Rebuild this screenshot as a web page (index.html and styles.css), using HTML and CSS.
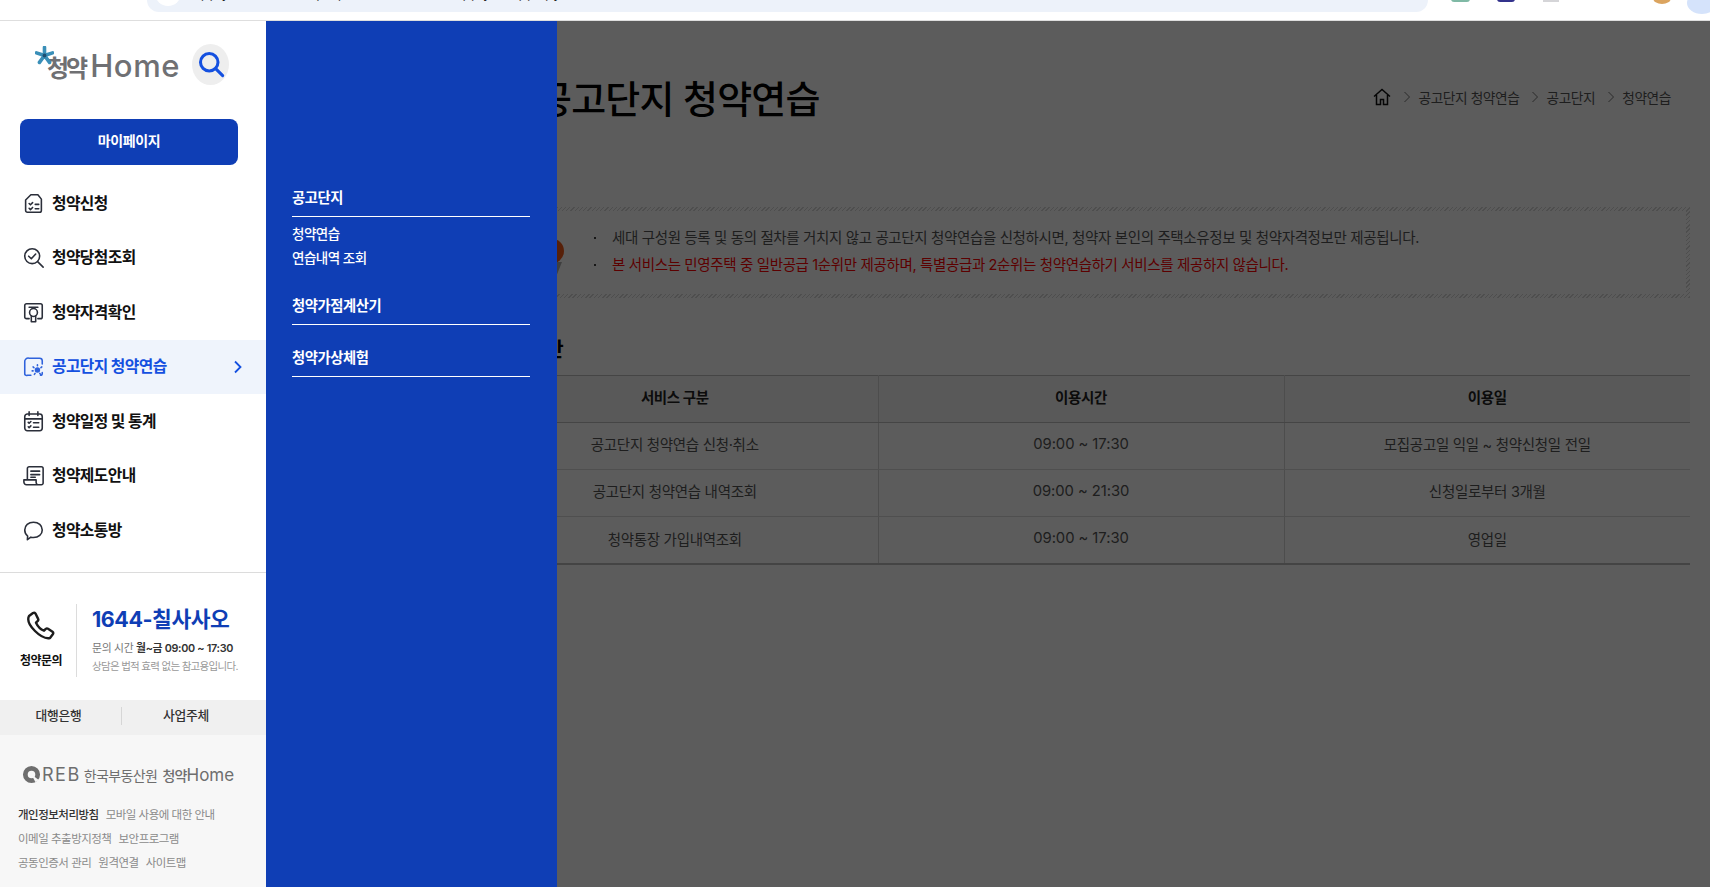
FILE: index.html
```html
<!DOCTYPE html>
<html lang="ko">
  <head>
    <title>청약Home - 공고단지 청약연습</title>
    <meta charset="utf-8" />
    <link rel="stylesheet" href="styles.css">
  </head>

  <body>
    <div class="toolbar">
      <div class="urlbar">
        <span class="url-dot"></span>
        <span class="url-text">applyhome.co.kr/ap/apa/selectPracticeApply.do?pp=py</span>
      </div>
      <div class="tool-icons">
        <span class="tool tool-green"></span>
        <span class="tool tool-navy"></span>
        <span class="tool tool-gray"></span>
        <span class="tool tool-orange"></span>
        <span class="tool tool-blue"></span>
      </div>
    </div>

    <div class="page">
      <aside class="sidebar">
        <div class="logo-row">
          <div class="logo">
            <svg class="logo-star" viewBox="0 0 20 20">
              <path d="M10 10V1.500M10 10l8.500-2.800M10 10l5.300 7.300M10 10l-5.300 7.300M10 10L1.500 7.200" stroke="#3a8fb8" stroke-width="3.800" stroke-linecap="round" />
              <circle cx="10" cy="10" r="2" fill="#1d4f73" />
            </svg>
            <span class="logo-kr">청약</span><span class="logo-en">Home</span>
          </div>
          <span class="search-btn">
            <svg viewBox="0 0 24 24" width="28" height="28" fill="none" stroke="#1450e0" stroke-width="2.600" stroke-linecap="round">
              <circle cx="10.500" cy="10.500" r="7.500" />
              <path d="M16 16l6 6" />
            </svg>
          </span>
        </div>

        <a class="mypage-btn">마이페이지</a>

        <ul class="menu">
          <li class="menu-item">
            <svg class="menu-icon" viewBox="0 0 24 24"><path d="M9 2h8l4 5v13a2 2 0 0 1-2 2H5a2 2 0 0 1-2-2V8z" /><path d="M7 12l1.500 1.500L11 11M7 17.500l1.500 1.500L11 16.500M14 13h4M14 18h4" /></svg>
            청약신청
          </li>
          <li class="menu-item">
            <svg class="menu-icon" viewBox="0 0 24 24"><circle cx="10.500" cy="10.500" r="8.500" /><path d="M6.500 10.500l3 3 5-5.500M17 17l6 6" /></svg>
            청약당첨조회
          </li>
          <li class="menu-item">
            <svg class="menu-icon" viewBox="0 0 24 24"><path d="M7 19H4a2 2 0 0 1-2-2V4a2 2 0 0 1 2-2h16a2 2 0 0 1 2 2v13a2 2 0 0 1-2 2h-3" /><circle cx="12" cy="12" r="4.500" /><path d="M9.500 16v6.500h5V16M7 6h10" /></svg>
            청약자격확인
          </li>
          <li class="menu-item menu-active">
            <svg class="menu-icon" viewBox="0 0 24 24"><path d="M7 2.500h12a3 3 0 0 1 3 3V9M22 19v1a2 2 0 0 1-2 2M9 22H5a2 2 0 0 1-3-2V7a4 4 0 0 1 5-4.500" /><circle cx="16.500" cy="16" r="2.200" fill="#2f62dc" /><path d="M16.500 10v1M11.500 12.500l1 .8M10.500 17h1M13 21l.8-1.200M20 21l-.8-1.200M21.500 12.500l-1 .8" /></svg>
            공고단지 청약연습
            <svg class="menu-arrow" viewBox="0 0 10 14"><path d="M2 1.500l5.500 5.500-5.500 5.500" /></svg>
          </li>
          <li class="menu-item">
            <svg class="menu-icon" viewBox="0 0 24 24"><rect x="2" y="3.500" width="20" height="19" rx="3" /><path d="M2 9h20M7 1v4M17 1v4M6 13l1 1 2-2M6 18l1 1 2-2M12 13.500h6M12 18.500h6" /></svg>
            청약일정 및 통계
          </li>
          <li class="menu-item">
            <svg class="menu-icon" viewBox="0 0 24 24"><path d="M5 17V4a2 2 0 0 1 2-2h14a2 2 0 0 1 2 2v17a2 2 0 0 1-2 1.500H4a3 3 0 0 1-3-3V17h14v3a2.500 2.500 0 0 0 2 2.500" /><path d="M9 7h10M9 11h10M9 14h5" /></svg>
            청약제도안내
          </li>
          <li class="menu-item">
            <svg class="menu-icon" viewBox="0 0 24 24"><path d="M12 2.500c5.800 0 10 3.800 10 8.800s-4.200 8.700-10 8.700c-1 0-2-.1-3-.4L5 22.500l.3-4.200C3.200 16.600 2 14.200 2 11.300 2 6.300 6.200 2.500 12 2.500z" /></svg>
            청약소통방
          </li>
        </ul>

        <div class="call">
          <div class="call-left">
            <svg class="call-icon" viewBox="0 0 32 32"><path d="M8 3L4 6c-2 4 1 10 6 15s10 8 15 7l3-4c.5-1 .3-1.700-.5-2.300l-4.500-3c-.8-.5-1.500-.4-2.200.2l-1.800 1.800c-3-1.200-6.500-4.800-8-8l1.800-1.800c.6-.7.7-1.500.2-2.300L10.500 3.500C9.800 2.700 9 2.500 8 3z" /></svg>
            <span class="call-label">청약문의</span>
          </div>
          <div class="call-right">
            <div class="call-number">1644-칠사사오</div>
            <div class="call-time">문의 시간 <b>월~금 09:00 ~ 17:30</b></div>
            <div class="call-note">상담은 법적 효력 없는 참고용입니다.</div>
          </div>
        </div>

        <div class="partner">
          <a class="partner-link">대행은행</a>
          <a class="partner-link">사업주체</a>
        </div>

        <div class="foot">
          <div class="foot-logo">
            <svg class="reb-mark" viewBox="0 0 20 20"><circle cx="10" cy="10" r="6.500" fill="none" stroke="#6e6e6e" stroke-width="5" /><path d="M10 10l8 6-4 2z" fill="#f7f7f7" /></svg>
            <span class="reb-text">REB</span>
            <span class="reb-kr">한국부동산원</span>
            <span class="reb-home"><b>청약</b>Home</span>
          </div>
          <div class="foot-line"><b>개인정보처리방침</b><span>모바일 사용에 대한 안내</span></div>
          <div class="foot-line"><span>이메일 추출방지정책</span><span>보안프로그램</span></div>
          <div class="foot-line"><span>공동인증서 관리</span><span>원격연결</span><span>사이트맵</span></div>
        </div>
      </aside>

      <main class="main">
        <div class="title-row">
          <h1 class="title">공고단지 청약연습</h1>
          <div class="crumbs">
            <svg class="crumb-home" viewBox="0 0 18 18"><path d="M1 8.500L9 1.500l8 7M3.500 7v9.500h4v-5h3v5h4V7" /></svg>
            <svg class="crumb-arrow" viewBox="0 0 8 12"><path d="M1.500 1l5 5-5 5" /></svg>
            <span>공고단지 청약연습</span>
            <svg class="crumb-arrow" viewBox="0 0 8 12"><path d="M1.500 1l5 5-5 5" /></svg>
            <span>공고단지</span>
            <svg class="crumb-arrow" viewBox="0 0 8 12"><path d="M1.500 1l5 5-5 5" /></svg>
            <span>청약연습</span>
          </div>
        </div>

        <div class="notice">
          <div class="notice-inner">
            <div class="notice-pic">
              <span class="pic-head"></span>
              <span class="pic-body"></span>
            </div>
            <ul class="notice-list">
              <li>세대 구성원 등록 및 동의 절차를 거치지 않고 공고단지 청약연습을 신청하시면, 청약자 본인의 주택소유정보 및 청약자격정보만 제공됩니다.</li>
              <li class="notice-red">본 서비스는 민영주택 중 일반공급 1순위만 제공하며, 특별공급과 2순위는 청약연습하기 서비스를 제공하지 않습니다.</li>
            </ul>
          </div>
        </div>

        <h2 class="section-title">이용시간</h2>

        <table class="time-table">
          <thead>
            <tr><th>서비스 구분</th><th>이용시간</th><th>이용일</th></tr>
          </thead>
          <tbody>
            <tr><td>공고단지 청약연습 신청·취소</td><td class="time-cell">09:00 ~ 17:30</td><td>모집공고일 익일 ~ 청약신청일 전일</td></tr>
            <tr><td>공고단지 청약연습 내역조회</td><td class="time-cell">09:00 ~ 21:30</td><td>신청일로부터 3개월</td></tr>
            <tr><td>청약통장 가입내역조회</td><td class="time-cell">09:00 ~ 17:30</td><td>영업일</td></tr>
          </tbody>
        </table>
      </main>

      <nav class="subpanel">
        <div class="sub-group sub-first">
          <div class="sub-head">공고단지</div>
          <a class="sub-link">청약연습</a>
          <a class="sub-link">연습내역 조회</a>
        </div>
        <div class="sub-group">
          <div class="sub-head">청약가점계산기</div>
        </div>
        <div class="sub-group">
          <div class="sub-head">청약가상체험</div>
        </div>
      </nav>
    </div>
  </body>
</html>
```

FILE: styles.css
```css
* {
  box-sizing: border-box;
}

html,
body {
  height: 100%;
  margin: 0;
  overflow: hidden;
}

body {
  font-family: Inter, "Noto Sans CJK KR", sans-serif;
  font-size: 14px;
  color: #111;
  background: #fff;
}

ul {
  list-style: none;
  margin: 0;
  padding: 0;
}

/* browser chrome, cut off at the top of the shot */
.toolbar {
  display: flex;
  height: 21px;
  border-bottom: 1px solid #dedede;
  background: #fff;
  overflow: hidden;
}

.urlbar {
  display: flex;
  align-items: flex-end;
  width: 1281px;
  height: 12px;
  margin-left: 147px;
  padding-left: 8px;
  border-radius: 0 0 16px 16px;
  background: #edf2fa;
  overflow: hidden;
  flex-shrink: 0;
}

.url-dot {
  width: 26px;
  height: 26px;
  margin-bottom: 6px;
  border-radius: 50%;
  background: #fff;
  flex-shrink: 0;
}

.url-text {
  margin-left: 12px;
  margin-bottom: 12px;
  font-size: 14px;
  line-height: 14px;
  color: #222;
  white-space: nowrap;
}

.tool-icons {
  display: flex;
  flex: 1;
  align-items: flex-start;
}

.tool {
  display: block;
  margin-top: -8px;
  height: 10px;
}

.tool-green {
  width: 19px;
  margin-left: 23px;
  border-radius: 3px;
  background: #7fb9a5;
}

.tool-navy {
  width: 18px;
  margin-left: 27px;
  border-radius: 3px;
  background: #33328c;
}

.tool-gray {
  width: 16px;
  margin-left: 28px;
  background: #d5d5d8;
}

.tool-orange {
  width: 18px;
  height: 12px;
  margin-left: 94px;
  border-radius: 50%;
  background: #dba45f;
}

.tool-blue {
  width: 30px;
  height: 22px;
  margin-left: 16px;
  border-radius: 50%;
  background: #d5e3fb;
  flex-shrink: 0;
}

.page {
  position: relative;
  display: flex;
  height: 866px;
}

/* left column */
.sidebar {
  position: relative;
  z-index: 2;
  display: flex;
  flex-direction: column;
  width: 266px;
  flex-shrink: 0;
  background: #fff;
}

.logo-row {
  display: flex;
  align-items: center;
  height: 42px;
  margin: 22px 0 34px 35px;
}

.logo {
  position: relative;
  display: flex;
  align-items: baseline;
  width: 140px;
  flex-shrink: 0;
  padding: 6px 0 0 12px;
  color: #6f7073;
  white-space: nowrap;
}

.logo-star {
  position: absolute;
  left: 0;
  top: 2px;
  width: 19px;
  height: 19px;
}

.logo-kr {
  font-size: 24px;
  font-weight: 600;
  letter-spacing: -3px;
  line-height: 32px;
}

.logo-en {
  margin-left: 5px;
  font-size: 31px;
  font-weight: 500;
  line-height: 32px;
  letter-spacing: 0.600px;
}

.search-btn {
  display: flex;
  align-items: center;
  justify-content: center;
  width: 37px;
  height: 41px;
  margin-left: 17px;
  border-radius: 50%;
  background: #eeeeee;
}

.mypage-btn {
  display: block;
  width: 218px;
  height: 46px;
  margin-left: 20px;
  border-radius: 8px;
  background: #0f3eb5;
  color: #fff;
  font-size: 14px;
  font-weight: 700;
  line-height: 43px;
  letter-spacing: -0.400px;
  text-align: center;
}

.menu {
  margin-top: 11px;
}

.menu-item {
  display: flex;
  align-items: center;
  height: 54.500px;
  padding: 0 0 2px 23px;
  font-size: 15.800px;
  font-weight: 700;
  letter-spacing: -0.600px;
  color: #111;
}

.menu-icon {
  width: 21px;
  height: 21px;
  margin: 2px 8px 0 0;
  fill: none;
  stroke: #2b2f3a;
  stroke-width: 1.800;
  stroke-linecap: round;
  stroke-linejoin: round;
}

.menu-active {
  background: #eff4fc;
  color: #1450e0;
}

.menu-active .menu-icon {
  stroke: #2f62dc;
}

.menu-arrow {
  width: 10px;
  height: 14px;
  margin: 2px 0 0 66px;
  fill: none;
  stroke: #1450e0;
  stroke-width: 1.800;
}

.call {
  display: flex;
  height: 128px;
  margin-top: 14px;
  padding-top: 31px;
  border-top: 1px solid #dcdcdc;
}

.call-left {
  display: flex;
  flex-direction: column;
  align-items: center;
  width: 77px;
  height: 73px;
  padding-left: 6px;
  border-right: 1px solid #dcdcdc;
}

.call-icon {
  width: 32px;
  height: 32px;
  margin-top: 6px;
  fill: none;
  stroke: #1c1c1c;
  stroke-width: 2.400;
  stroke-linejoin: round;
}

.call-label {
  margin-top: 9px;
  font-size: 12px;
  font-weight: 700;
  letter-spacing: -0.500px;
}

.call-right {
  padding-left: 15px;
}

.call-number {
  font-size: 21.500px;
  font-weight: 700;
  line-height: 30px;
  letter-spacing: -0.450px;
  color: #0f3eb5;
}

.call-time {
  margin-top: 7px;
  font-size: 10.800px;
  line-height: 16px;
  letter-spacing: -0.300px;
  color: #777;
}

.call-time b {
  font-weight: 600;
  color: #333;
}

.call-note {
  margin-top: 2px;
  font-size: 10.500px;
  line-height: 15px;
  letter-spacing: -0.700px;
  color: #999;
}

.partner {
  display: flex;
  align-items: center;
  height: 35px;
  padding-bottom: 2px;
  background: #f0f0f0;
}

.partner-link {
  width: 128px;
  font-size: 12.800px;
  font-weight: 500;
  line-height: 18px;
  letter-spacing: -0.300px;
  text-align: center;
  color: #333;
}

.partner-link:first-child {
  width: 122px;
  padding-right: 4px;
  border-right: 1px solid #d6d6d6;
}

.foot {
  flex: 1;
  padding: 27px 0 0 18px;
  background: #f7f7f7;
}

.foot-logo {
  display: flex;
  align-items: center;
  height: 26px;
  margin: 0 0 15px 4px;
  color: #6e6e6e;
}

.reb-mark {
  width: 19px;
  height: 19px;
}

.reb-text {
  margin-left: 1px;
  font-size: 18px;
  font-weight: 400;
  letter-spacing: 1.500px;
}

.reb-kr {
  margin-left: 3px;
  font-size: 14px;
  letter-spacing: -0.600px;
}

.reb-home {
  margin-left: 5px;
  font-size: 17px;
}

.reb-home b {
  font-size: 14px;
  font-weight: 500;
  letter-spacing: -0.800px;
}

.foot-line {
  display: flex;
  gap: 7px;
  height: 24px;
  font-size: 11.500px;
  line-height: 24px;
  letter-spacing: -0.500px;
  color: #8a8a8a;
}

.foot-line b {
  font-weight: 500;
  color: #333;
}

/* main content, dimmed by the open menu */
.main {
  position: relative;
  flex: 1;
  padding: 0 20px 0 206px;
}

.main::after {
  content: "";
  position: absolute;
  top: 0;
  right: 0;
  bottom: 0;
  left: 0;
  background: rgba(0, 0, 0, 0.64);
}

.title-row {
  display: flex;
  align-items: center;
  justify-content: space-between;
  height: 186px;
  padding: 0 19px 36px 65px;
}

.title {
  margin: 0;
  font-size: 38px;
  font-weight: 500;
  letter-spacing: -0.800px;
  color: #000;
}

.crumbs {
  display: flex;
  align-items: center;
  padding-top: 2px;
  font-size: 13.700px;
  letter-spacing: -0.400px;
  color: #555;
}

.crumb-home {
  width: 18px;
  height: 18px;
  fill: none;
  stroke: #111;
  stroke-width: 1.500;
}

.crumb-arrow {
  width: 8px;
  height: 12px;
  margin: 0 7px 0 12px;
  fill: none;
  stroke: #777;
  stroke-width: 1;
}

.notice {
  height: 91px;
  padding: 4px;
  background: repeating-linear-gradient(135deg, #d8d8d8 0 1px, #fff 1px 3px);
}

.notice-inner {
  display: flex;
  height: 83px;
  background: #fff;
}

.notice-pic {
  position: relative;
  width: 120px;
  flex-shrink: 0;
}

.pic-head {
  position: absolute;
  top: 27px;
  right: 32px;
  width: 28px;
  height: 26px;
  border-radius: 50%;
  background: #f05a1a;
}

.pic-body {
  position: absolute;
  top: 51px;
  right: 34px;
  width: 0;
  height: 0;
  border-top: 20px solid #b0b0b0;
  border-left: 20px solid transparent;
  border-right: 8px solid transparent;
}

.notice-list {
  padding: 14px 0 0 16px;
}

.notice-list li {
  position: relative;
  height: 26.500px;
  font-size: 14.500px;
  line-height: 26.500px;
  letter-spacing: -0.360px;
  color: #555;
  white-space: nowrap;
}

.notice-list li::before {
  content: "";
  position: absolute;
  left: -18px;
  top: 12px;
  width: 2px;
  height: 2px;
  background: #444;
}

.notice-list .notice-red {
  color: #f00;
}

.section-title {
  margin: 37px 0 0 0;
  padding-left: 18px;
  font-size: 20px;
  font-weight: 700;
  line-height: 30px;
  letter-spacing: 0;
  color: #000;
}

.time-table {
  width: 100%;
  margin-top: 10px;
  border-collapse: collapse;
  table-layout: fixed;
  border-top: 1px solid #c0c0c0;
  border-bottom: 2px solid #bdbdbd;
  font-size: 14.500px;
  text-align: center;
  color: #555;
}

.time-table th {
  height: 47px;
  padding: 0 0 5px;
  border-bottom: 1px solid #c0c0c0;
  background: #f7f7f7;
  font-weight: 700;
  letter-spacing: -0.400px;
  color: #222;
}

.time-table td {
  height: 47px;
  padding: 0 0 5px;
  border-bottom: 1px solid #dcdcdc;
  letter-spacing: -0.300px;
}

.time-table .time-cell {
  font-size: 14.800px;
  letter-spacing: -0.050px;
}

.time-table th + th,
.time-table td + td {
  border-left: 1px solid #d4d4d4;
}

.time-table tr:last-child td {
  padding-bottom: 3px;
  border-bottom: 0;
}

/* open submenu */
.subpanel {
  position: absolute;
  z-index: 3;
  top: 0;
  bottom: 0;
  left: 266px;
  width: 291px;
  padding: 164px 27px 0 26px;
  background: #0f3eb5;
  color: #fff;
}

.sub-group {
  margin-bottom: 20px;
}

.sub-first {
  margin-bottom: 23px;
}

.sub-head {
  padding-bottom: 6px;
  border-bottom: 1px solid #fff;
  font-size: 14.300px;
  font-weight: 700;
  line-height: 25px;
  letter-spacing: -0.400px;
}

.sub-link {
  display: block;
  font-size: 13.500px;
  font-weight: 500;
  line-height: 24px;
  letter-spacing: -0.500px;
}

.sub-head + .sub-link {
  margin-top: 5px;
}
```
